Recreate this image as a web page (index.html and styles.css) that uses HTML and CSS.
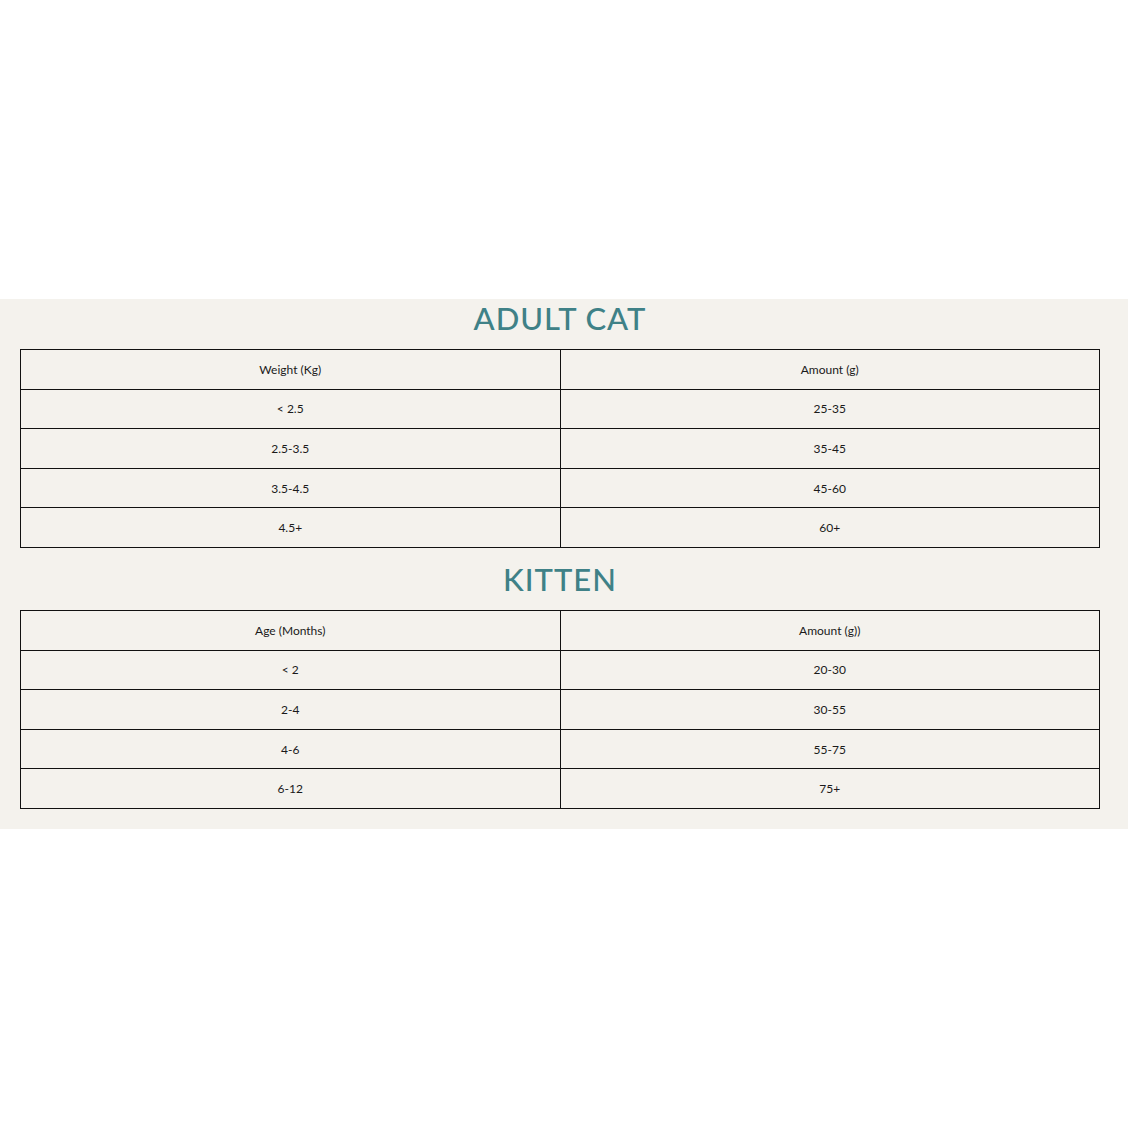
FILE: index.html
```html
<!DOCTYPE html>
<html>
<head>
<meta charset="utf-8">
<link rel="stylesheet" href="styles.css">
</head>
<body>
<div class="spacer"></div>
<section class="feeding">
  <h2 class="title">ADULT CAT</h2>
  <table class="guide">
    <tr><td>Weight (Kg)</td><td>Amount (g)</td></tr>
    <tr><td>&lt; 2.5</td><td>25-35</td></tr>
    <tr><td>2.5-3.5</td><td>35-45</td></tr>
    <tr><td>3.5-4.5</td><td>45-60</td></tr>
    <tr><td>4.5+</td><td>60+</td></tr>
  </table>
  <h2 class="title second">KITTEN</h2>
  <table class="guide">
    <tr><td>Age (Months)</td><td>Amount (g))</td></tr>
    <tr><td>&lt; 2</td><td>20-30</td></tr>
    <tr><td>2-4</td><td>30-55</td></tr>
    <tr><td>4-6</td><td>55-75</td></tr>
    <tr><td>6-12</td><td>75+</td></tr>
  </table>
</section>
</body>
</html>
```
FILE: styles.css
```css
html, body {
  margin: 0;
  padding: 0;
  background: #ffffff;
}
.spacer {
  height: 299px;
}
.feeding {
  background: #f4f2ed;
  padding: 0 28px 20px 20px;
}
.title {
  margin: 0 0 12px 0;
  font-family: Lato, "Open Sans", sans-serif;
  font-weight: 500;
  font-size: 31px;
  line-height: 38px;
  letter-spacing: 1px;
  color: #3f8187;
  text-align: center;
  width: 1080px;
}
.title.second {
  margin-top: 12px;
}
.guide {
  width: 1080px;
  border-collapse: collapse;
  table-layout: fixed;
}
.guide td {
  border: 1px solid #111111;
  height: 38.6px;
  padding: 0;
  text-align: center;
  vertical-align: middle;
  font-family: Lato, "Open Sans", sans-serif;
  font-size: 12px;
  color: #1a1a1a;
}
```
